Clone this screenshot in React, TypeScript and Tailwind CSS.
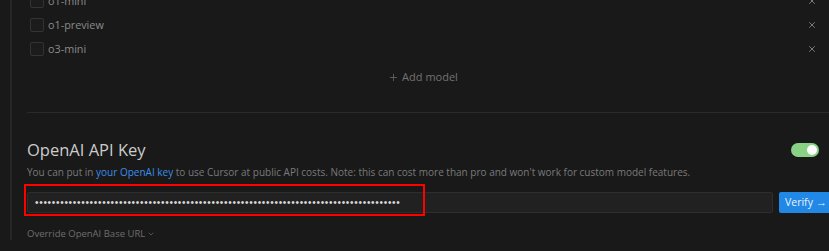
import { ChevronDown, Plus, X } from 'lucide-react';

const MODELS = ['o1-mini', 'o1-preview', 'o3-mini'];

const FONT = "font-['Open_Sans','Noto_Sans',sans-serif]";

function ModelRow({ name }: { name: string }) {
  return (
    <div className="flex h-[24px] items-center pl-[3px] pr-[2px]">
      <span className="h-[14px] w-[14px] rounded-[2px] border border-[#333333] bg-[#1c1c1c]" />
      <span className="ml-[4px] text-[10.8px] text-[#8b8b8b]">{name}</span>
      <X className="ml-auto text-[#8c8c8c]" size={10} strokeWidth={2} />
    </div>
  );
}

export default function App() {
  const dots = '•'.repeat(87);

  return (
    <div className={`h-[251px] w-[829px] overflow-hidden bg-[#191919] ${FONT}`}>
      <div className="ml-[10px] h-full border-l-2 border-[#262626] pl-[15px]">
        <div className="-mt-[11px] pr-[10px]">
          {MODELS.map((m) => (
            <ModelRow key={m} name={m} />
          ))}
          <div className="flex h-[32px] items-center justify-center gap-[3px] text-[11px] text-[#737373]">
            <Plus size={11} strokeWidth={1.5} />
            <span>Add model</span>
          </div>
        </div>

        <div className="mt-[19px] border-t border-[#2a2a2a]" />

        <div className="mt-[25px] flex h-[24px] items-center pr-[10px]">
          <h2 className="text-[16.5px] font-normal text-[#cccccc]">OpenAI API Key</h2>
          <span className="ml-auto flex h-[14px] w-[28px] items-center justify-end rounded-full bg-[#89d185] pr-[2px]">
            <span className="h-[10px] w-[10px] rounded-full bg-white" />
          </span>
        </div>

        <p className="mt-[2px] text-[10px] leading-[16px] text-[#7a7a7a]">
          You can put in <span className="text-[#3b8eea]">your OpenAI key</span> to use Cursor at public API costs. Note:
          this can cost more than pro and won't work for custom model features.
        </p>

        <div className="relative mt-[12px] flex gap-[6px]">
          <div className="flex h-[21px] w-[746px] shrink-0 items-center rounded-[2px] border border-[#2e2e2e] bg-[#212121] pl-[7px]">
            <span className="font-['Liberation_Sans',sans-serif] text-[10px] leading-none tracking-[0.7px] text-[#d8d8d8]">
              {dots}
            </span>
          </div>
          <button className="flex h-[21px] w-[54px] shrink-0 items-center gap-[3px] rounded-[2px] bg-[#2188e6] pl-[6px] text-[10.5px] text-[#e8f2fc]">
            Verify <span className="text-[11px]">→</span>
          </button>
          <div className="absolute -left-[3px] -top-[8px] h-[32px] w-[401px] border-2 border-[#ff0000]" />
        </div>

        <div className="mt-[14px] flex items-center gap-[2px] text-[9.5px] text-[#6e6e6e]">
          <span>Override OpenAI Base URL</span>
          <ChevronDown size={8} />
        </div>
      </div>
    </div>
  );
}
